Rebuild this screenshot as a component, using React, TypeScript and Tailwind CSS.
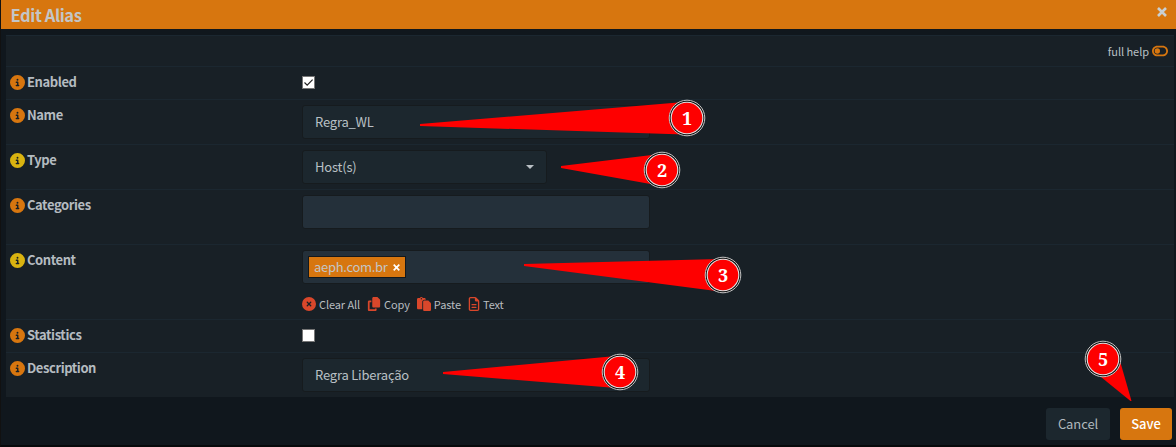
import React from 'react';
import {
  FaCircleInfo,
  FaCircleXmark,
  FaCopy,
  FaPaste,
  FaRegFileLines,
  FaToggleOff,
} from 'react-icons/fa6';

type RowProps = {
  label: string;
  height: string;
  advanced?: boolean;
  children: React.ReactNode;
};

function Row({ label, height, advanced = false, children }: RowProps) {
  return (
    <div className={`flex border-t border-[#1b2730] pt-[8px] ${height}`}>
      <div className="-mt-px flex h-4 w-[296px] shrink-0 items-center pl-[4px] text-[13px] font-bold tracking-[-0.42px] text-[#b4bbc0]">
        <FaCircleInfo className={`mr-[2px] size-[15px] shrink-0 ${advanced ? 'text-[#d9b310]' : 'text-[#d7760f]'}`} />
        <span className="leading-4">{label}</span>
      </div>
      <div>{children}</div>
    </div>
  );
}

function Checkbox({ checked = false }: { checked?: boolean }) {
  return (
    <span className="mt-px flex size-[13px] items-center justify-center border border-[#767676] bg-white">
      {checked && (
        <svg viewBox="0 0 11 11" className="size-[11px]" fill="none" stroke="#222" strokeWidth="1.2">
          <path d="M1.5 5.5 4.2 8.2 9.6 2.6" />
        </svg>
      )}
    </span>
  );
}

const fieldBase =
  'flex items-center rounded-[3px] border border-[#161b1e] text-[13px] leading-4 tracking-[-0.2px] text-[#b9c0c5]';

function Action({ icon, label }: { icon: React.ReactNode; label: string }) {
  return (
    <span className="flex items-center gap-[3px]">
      <span className="text-[14px] text-[#d9472b]">{icon}</span>
      {label}
    </span>
  );
}

type CalloutProps = { n: number; x: number; y: number; wedge: string };

function Callout({ n, x, y, wedge }: CalloutProps) {
  return (
    <g>
      <polygon points={wedge} fill="#fe0000" />
      <circle cx={x} cy={y} r="17.8" fill="#111" stroke="#c4c4c4" strokeWidth="1" />
      <circle cx={x} cy={y} r="15.8" fill="#fe0000" stroke="#e4e4e4" strokeWidth="1.1" />
      <text
        x={x}
        y={y + 7}
        textAnchor="middle"
        fill="#fff"
        className="font-['Noto_Serif','DejaVu_Serif_Condensed','DejaVu_Serif',serif] text-[18px] font-bold [font-stretch:condensed]"
      >
        {n}
      </text>
    </g>
  );
}

const callouts: CalloutProps[] = [
  { n: 1, x: 687, y: 118, wedge: '420,124 420,126 684,134.5 684,102' },
  { n: 2, x: 662, y: 170, wedge: '561,166 561,168 656,185 656,154.5' },
  { n: 3, x: 723, y: 275, wedge: '524,264 524,266 716,291 720,259' },
  { n: 4, x: 620, y: 372, wedge: '443,372 443,374 616,388 616,356' },
  { n: 5, x: 1103, y: 359, wedge: '1131.5,401 1130.5,401 1101,377 1120,361' },
];

export default function App() {
  return (
    <div className="relative h-[447px] w-[1176px] overflow-hidden border-b-2 border-l border-b-[#07090b] border-l-[#111] bg-[#10171d] font-['Noto_Sans_CJK_SC',sans-serif]">
      <header className="flex h-[29px] items-center justify-between bg-[#d7760f] pr-[9px] pl-[9.5px]">
        <h1 className="text-[16.5px] leading-6 font-bold tracking-[-0.4px] text-[#c3c5c6]">Edit Alias</h1>
        <svg viewBox="0 0 10 10" className="mb-[6px] size-[10px]" fill="none" stroke="#c9cfd2" strokeWidth="2.6">
          <path d="M1 1 9 9M9 1 1 9" />
        </svg>
      </header>

      <main className="mt-[6px] mr-[2px] ml-[5px] h-[362px] bg-[#182026]">
        <div className="flex h-[31px] items-center justify-end gap-[3px] border-t border-[#1b2730] pr-[6px] text-[11px] tracking-[-0.05px] text-[#b9c0c5]">
          <span>full help</span>
          <FaToggleOff className="size-[16px] text-[#d7760f]" />
        </div>

        <Row label="Enabled" height="h-[33px]">
          <Checkbox checked />
        </Row>
        <Row label="Name" height="h-[45px]">
          <div className={`${fieldBase} -mt-[3px] h-[34px] w-[348px] bg-[#1c272e] pl-3`}>Regra_WL</div>
        </Row>
        <Row label="Type" height="h-[45px]" advanced>
          <div className={`${fieldBase} -mt-[3px] h-[34px] w-[245px] justify-between bg-[#1c272e] pr-3 pl-3`}>
            Host(s)
            <svg viewBox="0 0 8 4" className="h-[4px] w-[8px]" fill="#b9c0c5">
              <path d="M0 0H8L4 4Z" />
            </svg>
          </div>
        </Row>
        <Row label="Categories" height="h-[55px]">
          <div className={`${fieldBase} -mt-[3px] h-[34px] w-[348px] bg-[#24303a]`} />
        </Row>
        <Row label="Content" height="h-[75px]" advanced>
          <div className={`${fieldBase} -mt-[3px] h-[34px] w-[348px] bg-[#24303a] pl-[5px]`}>
            <span className="flex h-[22px] items-center gap-[5px] border border-[#14181b] bg-[#d7760f] pr-[5px] pl-[5px] text-[13px] tracking-[-0.3px] text-[#c3c5c6]">
              aeph.com.br
              <svg viewBox="0 0 7 7" className="size-[7px]" fill="none" stroke="#fff" strokeWidth="1.7">
                <path d="M.7.7 6.3 6.3M6.3.7.7 6.3" />
              </svg>
            </span>
          </div>
          <div className="mt-[12px] flex h-4 items-center gap-[7px] text-[11px] leading-4 tracking-[-0.1px] text-[#b9bdc0]">
            <Action icon={<FaCircleXmark />} label="Clear All" />
            <Action icon={<FaCopy />} label="Copy" />
            <Action icon={<FaPaste />} label="Paste" />
            <Action icon={<FaRegFileLines className="w-[12px]" />} label="Text" />
          </div>
        </Row>
        <Row label="Statistics" height="h-[33px]">
          <Checkbox />
        </Row>
        <Row label="Description" height="h-[45px]">
          <div className={`${fieldBase} -mt-[3px] h-[34px] w-[348px] bg-[#1c272e] pl-3`}>Regra Liberação</div>
        </Row>
      </main>

      <footer className="mt-[11px] flex justify-end gap-[10px] pr-[4px] text-[13px] leading-4 tracking-[-0.1px]">
        <button className="h-[32px] w-[64px] rounded-[3px] bg-[#1c272e] text-[#b0b8bd]">Cancel</button>
        <button className="h-[32px] w-[52px] rounded-[3px] bg-[#d7760f] font-medium text-white">Save</button>
      </footer>

      <svg className="pointer-events-none absolute top-0 -left-px h-[447px] w-[1176px]" viewBox="0 0 1176 447">
        {callouts.map((c) => (
          <Callout key={c.n} {...c} />
        ))}
      </svg>
    </div>
  );
}
